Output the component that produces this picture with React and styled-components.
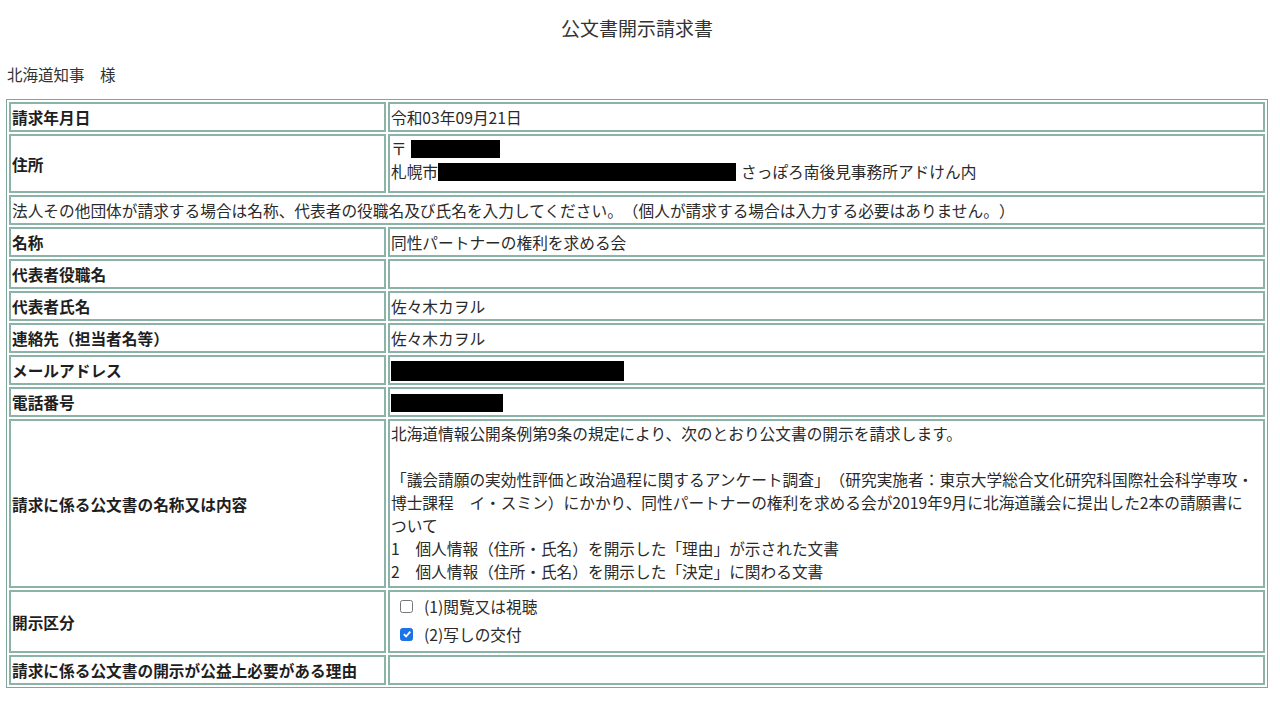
import styled, { createGlobalStyle } from 'styled-components';

const GlobalStyle = createGlobalStyle`
  html, body {
    margin: 0;
    padding: 0;
    background: #ffffff;
  }
  body {
    font-family: "Noto Sans CJK JP", "Noto Sans", sans-serif;
    color: #222222;
    text-spacing-trim: space-all;
  }
`;

const Page = styled.div`
  padding: 0 6px 0 6px;
  width: 1262px;
`;

const Title = styled.h1`
  margin: 0;
  padding-top: 15px;
  height: 47px;
  box-sizing: border-box;
  text-align: center;
  font-size: 19px;
  font-weight: normal;
  line-height: 26px;
  color: #333;
`;

const Addressee = styled.p`
  margin: 0;
  padding-left: 1px;
  height: 52px;
  font-size: 15.5px;
  line-height: 54px;
  color: #333;
`;

const Table = styled.table`
  width: 100%;
  border: 1px solid #7da79b;
  border-collapse: separate;
  border-spacing: 2px;
  font-size: 15.7px;
  line-height: 23px;
`;

const Label = styled.th`
  width: 371px;
  text-align: left;
  font-weight: bold;
  padding: 2px 1px 1px;
  border: 2px solid #8cb3a8;
  color: #1e1e1e;
`;

const Value = styled.td`
  padding: ${({ $pad }) => $pad || '2px 1px 1px'};
  border: 2px solid #8cb3a8;
  color: #2a2a2a;
  vertical-align: middle;
`;

const Note = styled.td`
  padding: 2px 1px 1px;
  border: 2px solid #8cb3a8;
  color: #2a2a2a;
`;

const Redact = styled.span`
  display: inline-block;
  vertical-align: ${({ $v }) => $v || '-3px'};
  width: ${({ $w }) => $w}px;
  height: ${({ $h }) => $h || 18}px;
  background: #000;
  margin-left: ${({ $ml }) => $ml || 0}px;
  margin-right: ${({ $mr }) => $mr || 0}px;
`;

const Line = styled.div`
  height: 23px;
  white-space: nowrap;
`;

const CheckRow = styled.label`
  display: flex;
  align-items: center;
  gap: 11px;
  height: 28px;
  padding-left: 9px;
  color: #2a2a2a;
`;

const Box = styled.span`
  flex: none;
  width: 13px;
  height: 13px;
  box-sizing: border-box;
  border-radius: 2.5px;
  border: 1px solid ${({ $on }) => ($on ? '#1a73e8' : '#767676')};
  background: ${({ $on }) => ($on ? '#1a73e8' : '#fff')};
  display: flex;
  align-items: center;
  justify-content: center;
`;

const rows = [
  ['代表者役職名', ''],
  ['代表者氏名', '佐々木カヲル'],
  ['連絡先（担当者名等）', '佐々木カヲル'],
];

const request = [
  '北海道情報公開条例第9条の規定により、次のとおり公文書の開示を請求します。',
  '',
  '「議会請願の実効性評価と政治過程に関するアンケート調査」（研究実施者：東京大学総合文化研究科国際社会科学専攻・',
  '博士課程　イ・スミン）にかかり、同性パートナーの権利を求める会が2019年9月に北海道議会に提出した2本の請願書に',
  'ついて',
  '1　個人情報（住所・氏名）を開示した「理由」が示された文書',
  '2　個人情報（住所・氏名）を開示した「決定」に関わる文書',
];

export default function App() {
  return (
    <>
      <GlobalStyle />
      <Page>
        <Title>公文書開示請求書</Title>
        <Addressee>北海道知事　様</Addressee>
        <Table>
          <tbody>
            <tr>
              <Label>請求年月日</Label>
              <Value>令和03年09月21日</Value>
            </tr>
            <tr>
              <Label>住所</Label>
              <Value $pad="1px 1px 8px">
                <Line>
                  〒<Redact $w={89} $ml={4} />
                </Line>
                <Line>
                  札幌市<Redact $w={298} $mr={5} />さっぽろ南後見事務所アドけん内
                </Line>
              </Value>
            </tr>
            <tr>
              <Note colSpan={2}>
                法人その他団体が請求する場合は名称、代表者の役職名及び氏名を入力してください。（個人が請求する場合は入力する必要はありません。）
              </Note>
            </tr>
            <tr>
              <Label>名称</Label>
              <Value>同性パートナーの権利を求める会</Value>
            </tr>
            {rows.map(([k, v]) => (
              <tr key={k}>
                <Label>{k}</Label>
                <Value>{v || '\u00a0'}</Value>
              </tr>
            ))}
            <tr>
              <Label>メールアドレス</Label>
              <Value>
                <Redact $w={233} $h={20} $v="-4px" />
              </Value>
            </tr>
            <tr>
              <Label>電話番号</Label>
              <Value>
                <Redact $w={112} />
              </Value>
            </tr>
            <tr>
              <Label>請求に係る公文書の名称又は内容</Label>
              <Value $pad="1px 1px 3px">
                {request.map((t, i) => (
                  <Line key={i}>{t}</Line>
                ))}
              </Value>
            </tr>
            <tr>
              <Label>開示区分</Label>
              <Value $pad="0 1px 3px">
                <CheckRow>
                  <Box />
                  (1)閲覧又は視聴
                </CheckRow>
                <CheckRow>
                  <Box $on>
                    <svg width="10" height="10" viewBox="0 0 10 10">
                      <path d="M1.8 5.2 L4.1 7.4 L8.3 2.6" fill="none" stroke="#fff" strokeWidth="1.8" />
                    </svg>
                  </Box>
                  (2)写しの交付
                </CheckRow>
              </Value>
            </tr>
            <tr>
              <Label>請求に係る公文書の開示が公益上必要がある理由</Label>
              <Value>{'\u00a0'}</Value>
            </tr>
          </tbody>
        </Table>
      </Page>
    </>
  );
}
